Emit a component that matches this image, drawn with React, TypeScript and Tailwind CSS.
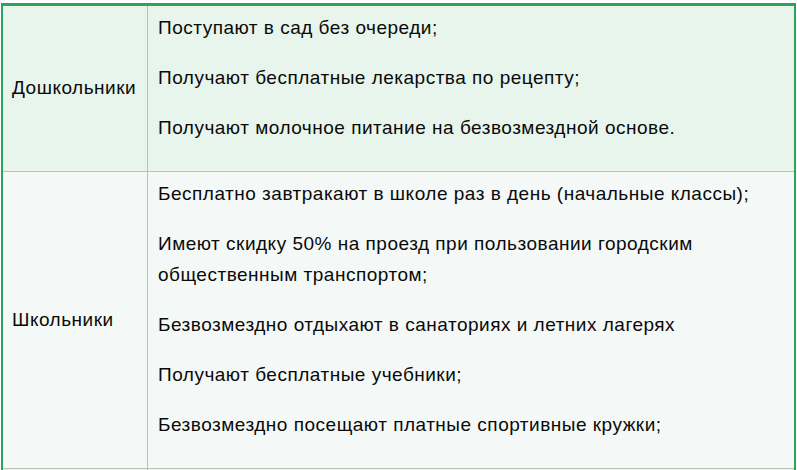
const rows = [
  {
    title: 'Дошкольники',
    bg: 'bg-[#e8f5ec]',
    items: [
      'Поступают в сад без очереди;',
      'Получают бесплатные лекарства по рецепту;',
      'Получают молочное питание на безвозмездной основе.',
    ],
  },
  {
    title: 'Школьники',
    bg: 'bg-[#f4f9f7]',
    items: [
      'Бесплатно завтракают в школе раз в день (начальные классы);',
      'Имеют скидку 50% на проезд при пользовании городским общественным транспортом;',
      'Безвозмездно отдыхают в санаториях и летних лагерях',
      'Получают бесплатные учебники;',
      'Безвозмездно посещают платные спортивные кружки;',
    ],
  },
];

export default function App() {
  return (
    <div className="h-[470px] w-[797px] overflow-hidden bg-white pl-px pt-[3px] font-['Liberation_Sans',Arial,sans-serif] text-[19px] tracking-[0.5px] text-[#0a0a0a]">
      <div className="w-[795px] border-x-2 border-t-[3px] border-[#2ba35c]">
        {rows.map((row, i) => (
          <div
            key={i}
            className={`flex ${row.bg} ${i > 0 ? 'border-t border-[#bdbdbd]' : ''}`}
          >
            <div className="flex w-[145px] shrink-0 items-center border-r border-[#bdbdbd] pl-[9px]">
              {row.title}
            </div>
            <div className="flex-1 pl-[10px] pr-4 pt-[6px] pb-[9px]">
              {row.items.map((t) => (
                <p key={t} className="mb-[19px] leading-[31px]">
                  {t}
                </p>
              ))}
            </div>
          </div>
        ))}
        <div className="flex h-[20px] border-t border-[#bdbdbd] bg-[#e8f5ec]">
          <div className="w-[145px] shrink-0 border-r border-[#bdbdbd]" />
          <div className="flex-1" />
        </div>
      </div>
    </div>
  );
}
